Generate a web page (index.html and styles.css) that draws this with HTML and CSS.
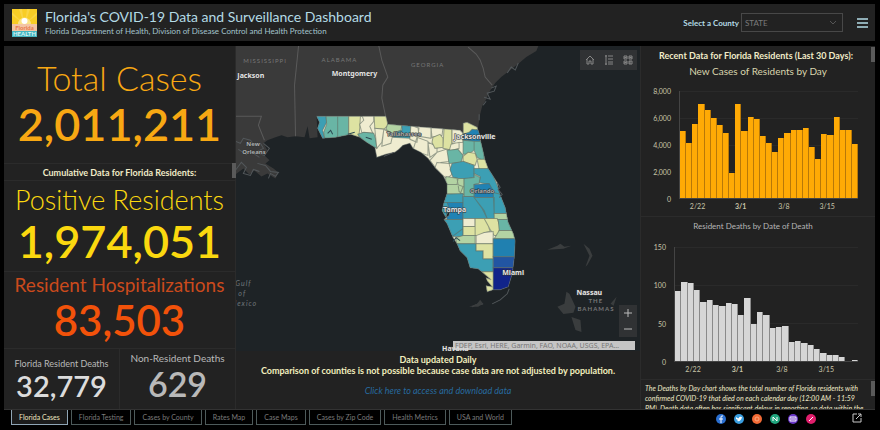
FILE: index.html
```html
<!DOCTYPE html>
<html lang="en">
<head>
    <meta charset="UTF-8">
    <meta name="viewport" content="width=device-width, initial-scale=1.0">
    <title>Florida's COVID-19 Data and Surveillance Dashboard</title>
    <link rel="stylesheet" href="styles.css">
</head>
<body>

<header class="header">
    <svg class="logo" viewBox="0 0 25 28">
        <rect width="25" height="15" fill="#f8cd25"/>
        <path d="M12 15L0 6V3zM12 15L7 0h3zM13 15L15 0h3zM13 15L25 3v3z" fill="#fad545"/>
        <path d="M6 15a6 6 0 0 1 13 0z" fill="#fbe383"/>
        <circle cx="12.500" cy="12" r="3" fill="#fff"/>
        <rect y="15" width="25" height="7" fill="#f3c5a4"/>
        <rect y="22" width="25" height="6" fill="#45b5c0"/>
        <text x="12.500" y="21" class="logo-top">Florida</text>
        <text x="12.500" y="27" class="logo-bottom">HEALTH</text>
    </svg>
    <div class="heading">
        <h1>Florida's COVID-19 Data and Surveillance Dashboard</h1>
        <p>Florida Department of Health, Division of Disease Control and Health Protection</p>
    </div>
    <label class="county-label" for="county">Select a County</label>
    <select id="county" class="county">
        <option>STATE</option>
    </select>
    <button class="menu" aria-label="Menu">
        <svg viewBox="0 0 11 10"><path d="M0 1h11M0 5h11M0 9h11" stroke-width="1.5"/></svg>
    </button>
</header>

<main class="main">
    <section class="totals">
        <div class="card total">
            <h2>Total Cases</h2>
            <strong>2,011,211</strong>
        </div>
        <div class="card strip">Cumulative Data for Florida Residents:</div>
        <div class="card positive">
            <h2>Positive Residents</h2>
            <strong>1,974,051</strong>
        </div>
        <div class="card hospital">
            <h2>Resident Hospitalizations</h2>
            <strong>83,503</strong>
        </div>
        <div class="deaths">
            <div class="card resident">
                <h2>Florida Resident Deaths</h2>
                <strong>32,779</strong>
            </div>
            <div class="card non-resident">
                <h2>Non-Resident Deaths</h2>
                <strong>629</strong>
            </div>
        </div>
        <span class="thumb thumb-left"></span>
    </section>

    <section class="center">
        <div class="map">
            <svg class="map-canvas" viewBox="236 46 404 304" preserveAspectRatio="xMidYMid slice">
                <defs>
                    <clipPath id="florida">
                        <path id="outline" d="M317 116H386L388 124L436 128L460 130L463 133V123L467 122L477 127L479 133L481 143L485 160L488 168L497 182L499 192L505 207L508 222L513 233L515 240L514 257L512 273L508 286L500 289L493 289L487 291L486 285L492 286L487 280L486 277L491 279L484 273L478 268L470 267L467 257L460 250L457 243L453 237L447 223L444 219L449 215L450 210L447 213L446 217L442 210L444 202L447 193L447 183L443 175L435 167L428 158L421 152L413 148L410 143L403 145L399 149L395 152L386 154L377 157L375 147L367 142L360 137L351 134L336 137L323 138L321 134L318 128L320 122Z"/>
                    </clipPath>
                </defs>

                <!-- mainland and delta -->
                <path class="land" d="M236 46H538L536 51L526 57L519 63L510 70L501 77L495 83L489 92L486 99L482 106L480 114L478 127L463 133L388 124L317 116L318 137L310 138L308 126L305 137L296 136L288 137L282 135L276 137L268 140L264 143L268 150L264 154L270 160L266 163L274 168L279 172L276 178L268 173L262 176L255 170L250 174L244 168L236 174Z"/>
                <path class="creek" d="M236 141l5 2 3-5 7 2 4 5 6-2 3 5-6 3M236 170l6-8 5 5-3 6 7 2 3-6 6 2M239 149l8 5 4-3 9 6M258 163l8 2 5 6 8 1-3 4-5-3-2 5M264 143l6 5-5 7-6-2M491 88l5-2-2 5-7 2 3 6-6-2M507 73l4-6 4 3 3-7M483 105l3-4M479 114v6"/>
                <path class="state" d="M299 46L295 85L296 136M379 46L382 60L388 77L383 85L382 98L386 117M236 116H262L259 125L265 140M468 47L476 54L480 60L483 68L485 77L492 85"/>

                <!-- counties, coloured by case count -->
                <g class="counties" clip-path="url(#florida)">
                    <rect class="c0" x="310" y="110" width="210" height="185"/>
                    <path class="c4" d="M310 110H326L327 122L323 130L326 142H310z"/>
                    <path class="c3" d="M326 110H338V142H326L324 132L327 124zM338 110H349V142H338z"/>
                    <path class="c1" d="M349 110H361L360 128L359 137H349z"/>
                    <path class="c0" d="M361 112H374V121L370 126L373 133L362 132L360 124L364 120z"/>
                    <path class="c1" d="M374 110H387L388 125L384 129L375 128z"/>
                    <path class="c3" d="M358 134L364 132L374 133L376 139L377 148L366 144z"/>
                    <path class="c0" d="M375 128L384 129L382 142L377 148zM384 129L393 134L391 143L382 146z"/>
                    <path class="c2" d="M388 123L402 125L401 130L396 132L393 134L386 129z"/>
                    <path class="c4" d="M402 125H411L410 138L393 137L396 132L402 130z"/>
                    <path class="c0" d="M411 125L419 128L417 142L410 139zM418 126H431V138L419 136zM417 137L428 141L428 155L413 150zM431 126L443 128L442 135L432 137zM428 142L437 146L437 152L430 157zM437 152L449 148L449 161L441 162L437 170L430 160z"/>
                    <path class="c1" d="M433 137L440 134L443 138V147L435 148L432 142zM444 128L452 129V150L443 148z"/>
                    <path class="c0" d="M452 128H463V142L452 143zM451 144L459 142L459 148L449 151z"/>
                    <path class="c1" d="M463 120L480 127L470 134L463 133z"/>
                    <path class="c5" d="M463 134L469 132L472 129L480 130V142L463 140z"/>
                    <path class="c3" d="M463 140L474 141V150L468 154H463zM474 141H484V161L477 157L474 150z"/>
                    <path class="c3" d="M447 150L458 149L463 155L461 162L449 163z"/>
                    <path class="c1" d="M463 156L468 152L475 153L477 159L475 165L463 161zM477 159H488V169H479z"/>
                    <path class="c0" d="M437 162L449 163L452 174L447 178L434 170z"/>
                    <path class="c4" d="M452 163L463 161L474 165V177L464 179L453 177L450 169z"/>
                    <path class="c4" d="M474 168H490L502 197H493L489 184L479 182L480 176L474 173z"/>
                    <path class="c2" d="M446 176L458 178L457 184L463 186L460 194L444 193zM447 184L457 184M457 178H464V195L459 191z"/>
                    <path class="c3" d="M464 178L474 177V174L480 177L479 183L474 184V196H464z"/>
                    <path class="c5" d="M474 184L489 183L494 192V197H474z"/>
                    <path class="c4" d="M440 194L463 193V203H440z"/>
                    <path class="c5" d="M445 202H463V219H447z"/>
                    <path class="c4" d="M440 202H447L450 210L444 218H440zM463 196H474V197L484 210L487 218H463zM474 197H494V213L495 218H487L482 208zM493 192L510 196V213H494z"/>
                    <path class="c2" d="M494 213H512V219H494z"/>
                    <path class="c4" d="M440 219H463V236H440zM452 236L463 228V236z"/>
                    <path class="c0" d="M463 218H475V226H463z"/>
                    <path class="c1" d="M463 226H475V235H463zM475 218H484L488 225L490 231L484 232L481 235H475zM484 218H497L500 226L498 235H494L490 229z"/>
                    <path class="c3" d="M498 219H514V230H499z"/>
                    <path class="c2" d="M499 230H516V238H494zM456 237L463 235H475V243H456z"/>
                    <path class="c0" d="M476 235L484 232L493 231V243H476z"/>
                    <path class="c4" d="M455 243H476V250H483V258H493V271H460z"/>
                    <path class="c1" d="M476 243H493V258H483V250H476zM480 271H494V295H480z"/>
                    <path class="c6" d="M493 238H520V256H493z"/>
                    <path class="c7" d="M493 256H520V267H493z"/>
                    <path class="c8" d="M493 267H520V290H493z"/>
                </g>
                <use href="#outline" class="coast"/>
                <path class="creek" d="M497 182l3 5-2 2 4 5-3 3M509 288l-2 5-7 6-8 4M483 303l-9 2 6-3-8 4M384 156l10-4"/>
                <path class="inlet" d="M328 133l3-3 2 4M348 134l7-2M366 137l6 2M453 241l3-4 4 3M446 213l4-5"/>

                <!-- islands -->
                <path class="island" d="M469 306l8-3 3-4 3 4-5 3zM547 249l10-4 3-2 4 3 7-1-8 3zM583 243l6 5 3 7-5 9-2 2 4-11zM566 291l3 2 6 13-2 6-10 1-6-7 7-3zM571 316l9 3 1 12-6-2zM616 296l-3 9-3-2z"/>

                <g class="region">
                    <text x="244" y="63">MISSISSIPPI</text>
                    <text x="322" y="62">ALABAMA</text>
                    <text x="411" y="67">GEORGIA</text>
                </g>
                <g class="region islands">
                    <text x="588" y="302">THE</text>
                    <text x="577" y="310">BAHAMAS</text>
                </g>
                <g class="gulf">
                    <text x="236" y="285">Gulf</text>
                    <text x="239" y="295">of</text>
                    <text x="231" y="305">Mexico</text>
                </g>
                <g class="city">
                    <text x="238" y="78">Jackson</text>
                    <text x="332" y="76">Montgomery</text>
                    <text x="454" y="139">Jacksonville</text>
                    <text x="443" y="211">Tampa</text>
                    <text x="502" y="274">Miami</text>
                    <text x="576" y="294">Nassau</text>
                    <text x="442" y="350">Havana</text>
                </g>
                <g class="city faint">
                    <text x="247" y="146">New</text>
                    <text x="243" y="154">Orleans</text>
                    <text x="387" y="136">Tallahassee</text>
                    <text x="470" y="193">Orlando</text>
                </g>
            </svg>
            <div class="tools">
                <button aria-label="Home"><svg viewBox="0 0 10 10"><path d="M1 5l4-4 4 4M2 4v5h2V6h2v3h2V4"/></svg></button>
                <button aria-label="Legend"><svg viewBox="0 0 10 10"><path d="M2 0v10M1 1h2M1 9h2M4 1h5M4 4h5M4 7h5M4 9h5"/></svg></button>
                <button aria-label="Basemaps"><svg viewBox="0 0 10 10"><path d="M1 1h3v3H1zM6 1h3v3H6zM1 6h3v3H1zM6 6h3v3H6zM1 3l3-1M6 2l3 1M1 8l3-1M7 6v3"/></svg></button>
            </div>
            <div class="zoom">
                <button aria-label="Zoom in"><svg viewBox="0 0 8 8"><path d="M4 0v8M0 4h8"/></svg></button>
                <button aria-label="Zoom out"><svg viewBox="0 0 8 8"><path d="M0 4h8"/></svg></button>
            </div>
            <div class="attribution">FDEP, Esri, HERE, Garmin, FAO, NOAA, USGS, EPA…</div>
        </div>
        <div class="notice">
            <p>Data updated Daily</p>
            <p>Comparison of counties is not possible because case data are not adjusted by population.</p>
            <a href="#">Click here to access and download data</a>
        </div>
    </section>

    <section class="recent">
        <div class="panel cases">
            <h3>Recent Data for Florida Residents (Last 30 Days):</h3>
            <h4>New Cases of Residents by Day</h4>
            <div class="chart">
                <div class="y-axis"><span>8,000</span><span>6,000</span><span>4,000</span><span>2,000</span><span>0</span></div>
                <div class="plot" id="casesPlot"></div>
                <div class="x-axis"><span class="w1">2/22</span><span class="w2">3/1</span><span class="w3">3/8</span><span class="w4">3/15</span></div>
            </div>
            <span class="thumb thumb-right"></span>
        </div>
        <div class="panel by-death">
            <h5>Resident Deaths by Date of Death</h5>
            <div class="chart">
                <div class="y-axis"><span>150</span><span>100</span><span>50</span><span>0</span></div>
                <div class="plot" id="deathsPlot"></div>
                <div class="x-axis"><span class="w1">2/22</span><span class="w2">3/1</span><span class="w3">3/8</span><span class="w4">3/15</span></div>
            </div>
        </div>
        <div class="panel about">
            <p>The Deaths by Day chart shows the total number of Florida residents with<br>
            confirmed COVID-19 that died on each calendar day (12:00 AM - 11:59<br>
            PM). Death data often has significant delays in reporting, so data within the</p>
            <span class="thumb thumb-right"></span>
        </div>
    </section>
</main>

<footer class="footer">
    <nav class="tabs">
        <button class="active">Florida Cases</button>
        <button>Florida Testing</button>
        <button>Cases by County</button>
        <button>Rates Map</button>
        <button>Case Maps</button>
        <button>Cases by Zip Code</button>
        <button>Health Metrics</button>
        <button>USA and World</button>
    </nav>
    <div class="social">
        <a href="#" class="s1" aria-label="Facebook"><svg viewBox="0 0 10 10"><path d="M7 2H6Q5 2 5 3v6M3 5h4"/></svg></a>
        <a href="#" class="s2" aria-label="Twitter"><svg viewBox="0 0 10 10"><path d="M2 3q2 2 3 1 0-2 3-1-1 5-5 4l1-1-2-1z" fill="#fff" stroke="none"/></svg></a>
        <a href="#" class="s3" aria-label="Reddit"><svg viewBox="0 0 10 10"><circle cx="5" cy="5" r="2"/></svg></a>
        <a href="#" class="s4" aria-label="Mail"><svg viewBox="0 0 10 10"><path d="M3 7V3l4 4V3"/></svg></a>
        <a href="#" class="s5" aria-label="Embed"><svg viewBox="0 0 10 10"><path d="M2 3h6v4H2zM4 4v2M6 4v2"/></svg></a>
        <a href="#" class="s6" aria-label="Link"><svg viewBox="0 0 10 10"><path d="M3 7l4-4"/></svg></a>
    </div>
    <button class="share" aria-label="Open in new window">
        <svg viewBox="0 0 10 10"><path d="M5 1H1v8h8V5M6 1h3v3M9 1L4 6"/></svg>
    </button>
</footer>

<script src="script.js"></script>
</body>
</html>
```

FILE: styles.css
```css
* {
    box-sizing: border-box;
    margin: 0;
    padding: 0;
}

body {
    display: flex;
    flex-direction: column;
    height: 100vh;
    padding: 4px 5px 0 4px;
    background: #000;
    color: #f0ebc8;
    font-family: Lato, "Liberation Sans", sans-serif;
    overflow: hidden;
}

button {
    background: none;
    border: 0;
    color: inherit;
    font: inherit;
    cursor: pointer;
}

svg {
    display: block;
    fill: none;
}

h1, h2, h3, h4, h5 {
    font-weight: 400;
}

/* Header */
.header {
    display: flex;
    align-items: center;
    height: 37px;
    padding: 0 7px 0 8px;
    background: #222;
    color: #b4dbe6;
}

.logo {
    width: 25px;
    height: 28px;
    margin-right: 8px;
}

.logo text {
    font-size: 6px;
    font-weight: 700;
    text-anchor: middle;
}

.logo-top {
    fill: #e9784a;
}

.logo-bottom {
    fill: #d8f4f4;
}

.heading {
    flex: 1;
}

.heading h1 {
    font-size: 14px;
    line-height: 17px;
}

.heading p {
    color: #a3c3cc;
    font-size: 8px;
    line-height: 13px;
}

.county-label {
    margin-right: 2px;
    font-size: 8px;
    font-weight: 700;
}

.county {
    width: 102px;
    height: 19px;
    margin-right: 14px;
    padding-left: 3px;
    appearance: none;
    background: #222 url("data:image/svg+xml,%3Csvg xmlns='http://www.w3.org/2000/svg' width='8' height='6' fill='none' stroke='%23555'%3E%3Cpath d='M1 1l3 3 3-3'/%3E%3C/svg%3E") no-repeat right 5px center;
    border: 1px solid #484848;
    color: #7a7a7a;
    font: 8px Lato, sans-serif;
}

.menu svg {
    width: 11px;
    height: 10px;
    stroke: #b4dbe6;
}

/* Columns */
.main {
    display: grid;
    grid-template-columns: 231fr 404fr 234fr;
    gap: 1px;
    flex: 1;
    min-height: 0;
    margin-top: 5px;
    background: #2b2b2b;
}

.totals {
    position: relative;
    display: grid;
    grid-template-rows: 117fr 16fr 90fr 76fr 60fr;
    gap: 1px;
}

.card {
    display: flex;
    flex-direction: column;
    align-items: center;
    justify-content: center;
    min-height: 0;
    background: #222;
    white-space: nowrap;
}

.card h2 {
    font-weight: 300;
}

.card strong {
    font-weight: 600;
}

.total,
.positive,
.hospital {
    padding-bottom: 5px;
}

.total {
    color: #f8a813;
}

.total h2 {
    font-size: 34px;
    line-height: 44px;
}

.total strong,
.positive strong {
    font-size: 45px;
    line-height: 48px;
}

.strip {
    font-size: 9px;
    font-weight: 700;
}

.positive {
    color: #fbd80f;
}

.positive h2 {
    font-size: 27px;
    line-height: 34px;
}

.hospital {
    color: #f2520a;
}

.hospital h2 {
    color: #cb4a1c;
    font-size: 19px;
    font-weight: 400;
    line-height: 24px;
}

.hospital strong {
    font-size: 42px;
    line-height: 46px;
}

.deaths {
    display: grid;
    grid-template-columns: 1fr 1fr;
    gap: 1px;
}

.deaths .card {
    color: #b9b9b9;
}

.deaths h2 {
    font-weight: 400;
}

.resident h2 {
    font-size: 9px;
    line-height: 13px;
}

.resident strong {
    color: #dcdcdc;
    font-size: 29px;
    line-height: 32px;
}

.non-resident {
    padding-bottom: 4px;
}

.non-resident h2 {
    font-size: 10px;
    line-height: 14px;
}

.non-resident strong {
    font-size: 34px;
    line-height: 38px;
}

.thumb {
    position: absolute;
    width: 4px;
    height: 15px;
    background: #5a5a5a;
}

.thumb-left {
    top: 117px;
    right: -1px;
}

.thumb-right {
    top: 1px;
    right: 0;
}

/* Map */
.center {
    display: flex;
    flex-direction: column;
    min-height: 0;
}

.map {
    position: relative;
    flex: 1;
    min-height: 0;
    background: #1e2326;
}

.map-canvas {
    position: absolute;
    width: 100%;
    height: 100%;
}

.land {
    fill: #3a3a3a;
}

.creek {
    stroke: #52575a;
}

.inlet {
    stroke: #2c4a52;
}

.state {
    stroke: #5a5a5a;
}

.island {
    fill: #3a3d3e;
}

.counties {
    stroke: #5f6d60;
    stroke-opacity: 0.6;
}

.coast {
    stroke: #5a6462;
    stroke-opacity: 0.5;
}

.c0 { fill: #efecd0; }
.c1 { fill: #dde2a2; }
.c2 { fill: #b3d3a3; }
.c3 { fill: #69b5a5; }
.c4 { fill: #3c9fb4; }
.c5 { fill: #2082b4; }
.c6 { fill: #2080b0; }
.c7 { fill: #2255a2; }
.c8 { fill: #11248a; }

.region {
    fill: #777;
    font-size: 6px;
    letter-spacing: 1px;
}

.islands {
    font-weight: 700;
}

.gulf {
    fill: #70777b;
    font-size: 7px;
    font-style: italic;
    letter-spacing: 1px;
}

.city {
    fill: #e4e4e4;
    stroke: #333;
    stroke-width: 1px;
    paint-order: stroke;
    font: 700 7px "Noto Sans", sans-serif;
}

.faint {
    fill: #a9adad;
    font-size: 6px;
}

.tools {
    position: absolute;
    top: 4px;
    right: 3px;
    display: flex;
    width: 57px;
    height: 20px;
    background: #303234;
}

.tools button {
    flex: 1;
}

.tools svg {
    width: 10px;
    height: 10px;
    margin: auto;
    stroke: #858585;
}

.zoom {
    position: absolute;
    right: 3px;
    bottom: 14px;
    width: 18px;
    background: #303234;
}

.zoom button {
    display: block;
    width: 18px;
    height: 16px;
}

.zoom svg {
    width: 8px;
    height: 8px;
    margin: auto;
    stroke: #bbb;
}

.attribution {
    position: absolute;
    right: 5px;
    bottom: 1px;
    width: 182px;
    padding-left: 2px;
    background: rgba(215, 215, 215, 0.9);
    color: #777;
    font: 7px/9px "Noto Sans", sans-serif;
    white-space: nowrap;
}

.notice {
    height: 58px;
    padding-top: 3px;
    background: #222;
    color: #f2efbf;
    font-size: 9px;
    font-weight: 700;
    line-height: 11px;
    text-align: center;
}

.notice a {
    display: block;
    margin-top: 9px;
    color: #276a9f;
    font-weight: 400;
    font-style: italic;
    text-decoration: none;
}

/* Charts */
.recent {
    display: grid;
    grid-template-rows: 170fr 163fr 29fr;
    gap: 1px;
    min-height: 0;
}

.panel {
    position: relative;
    display: flex;
    flex-direction: column;
    min-height: 0;
    background: #222;
    text-align: center;
}

.cases h3 {
    padding-top: 3px;
    padding-right: 4px;
    font-size: 9px;
    font-weight: 700;
    line-height: 14px;
    white-space: nowrap;
}

.cases h4 {
    padding-bottom: 11px;
    color: #d9d5ad;
    font-size: 10px;
    line-height: 17px;
}

.by-death h5 {
    padding: 3px 10px 15px 0;
    color: #b5b5b5;
    font-size: 8px;
    line-height: 12px;
}

.chart {
    display: grid;
    grid-template-columns: 30px 1fr;
    grid-template-rows: 1fr 17px;
    column-gap: 8px;
    flex: 1;
    min-height: 0;
    padding-right: 17px;
    color: #c9c5a9;
    font-size: 7px;
}

.by-death .chart {
    grid-template-columns: 25px 1fr;
}

.y-axis {
    display: flex;
    flex-direction: column;
    justify-content: space-between;
    margin: -4px 0;
    line-height: 8px;
    text-align: right;
}

.plot {
    display: flex;
    align-items: flex-end;
    border-left: 1px solid #444;
    border-bottom: 1px solid #444;
    background: repeating-linear-gradient(#2a2a2a 0 1px, transparent 1px 25%);
}

.by-death .plot {
    background: repeating-linear-gradient(#2a2a2a 0 1px, transparent 1px 33.333%);
}

.bar {
    flex: 1;
    border-right: 1px solid #b87808;
    background: #ffaa05;
}

.by-death .bar {
    border-color: #8a8a8a;
    background: #d6d6d6;
}

.x-axis {
    grid-column: 2;
    display: grid;
    grid-template-columns: repeat(29, 1fr);
    padding-top: 3px;
    line-height: 8px;
}

.x-axis span {
    display: flex;
    justify-content: center;
    width: 100%;
    min-width: 0;
}

.w1 { grid-column: 3 / span 2; }
.w2 { grid-column: 10 / span 2; font-weight: 700; }
.w3 { grid-column: 17 / span 2; }
.w4 { grid-column: 24 / span 2; }

.about {
    overflow: hidden;
}

.about p {
    padding: 3px 4px 0;
    font-size: 7px;
    font-style: italic;
    line-height: 10px;
    text-align: left;
    white-space: nowrap;
}

/* Footer */
.footer {
    display: flex;
    height: 21px;
    border-top: 1px solid #333;
}

.tabs {
    display: flex;
    flex: 1;
    gap: 3px;
    padding-left: 7px;
}

.tabs button {
    height: 15px;
    padding: 0 7px;
    border: 1px solid #4d5a5a;
    border-top: 0;
    color: #7a7a7a;
    font-size: 7px;
    white-space: nowrap;
}

.tabs .active {
    background: #1b1b1b;
    border-color: #8fa5b5;
    color: #eee6c0;
}

.social {
    display: flex;
    gap: 8px;
    margin-right: 36px;
    padding-top: 4px;
}

.social a {
    width: 10px;
    height: 10px;
    border-radius: 50%;
}

.social svg {
    width: 10px;
    height: 10px;
    stroke: #fff;
}

.s1 { background: #2a6fd0; }
.s2 { background: #3a9ee0; }
.s3 { background: #f26a35; }
.s3 circle { stroke: #f9a880; }
.s4 { background: #21a57e; }
.s5 { background: #6a37c8; }
.s6 { background: #e01e6c; }

.share {
    align-self: flex-start;
    margin: 3px 13px 0 0;
}

.share svg {
    width: 10px;
    height: 10px;
    stroke: #c8c8c8;
}
```

FILE: script.js
```javascript
const cases = [4963, 4123, 5556, 7037, 6543, 5975, 5457, 4864, 1827, 7012, 5012, 6074, 5901, 4642, 4123, 3407, 4444, 4840, 5037, 5086, 5185, 3827, 2889, 4741, 4716, 6049, 5086, 5037, 4049];
const deaths = [92, 104, 102, 93, 78, 80, 73, 72, 76, 75, 60, 82, 49, 64, 61, 43, 45, 46, 25, 26, 24, 21, 16, 11, 8, 8, 5, 0, 1];

function drawBars(id, values, max) {
    const plot = document.getElementById(id);
    values.forEach((value) => {
        const bar = document.createElement("div");
        bar.className = "bar";
        bar.style.height = (value / max * 100) + "%";
        plot.appendChild(bar);
    });
}

drawBars("casesPlot", cases, 8000);
drawBars("deathsPlot", deaths, 150);
```
